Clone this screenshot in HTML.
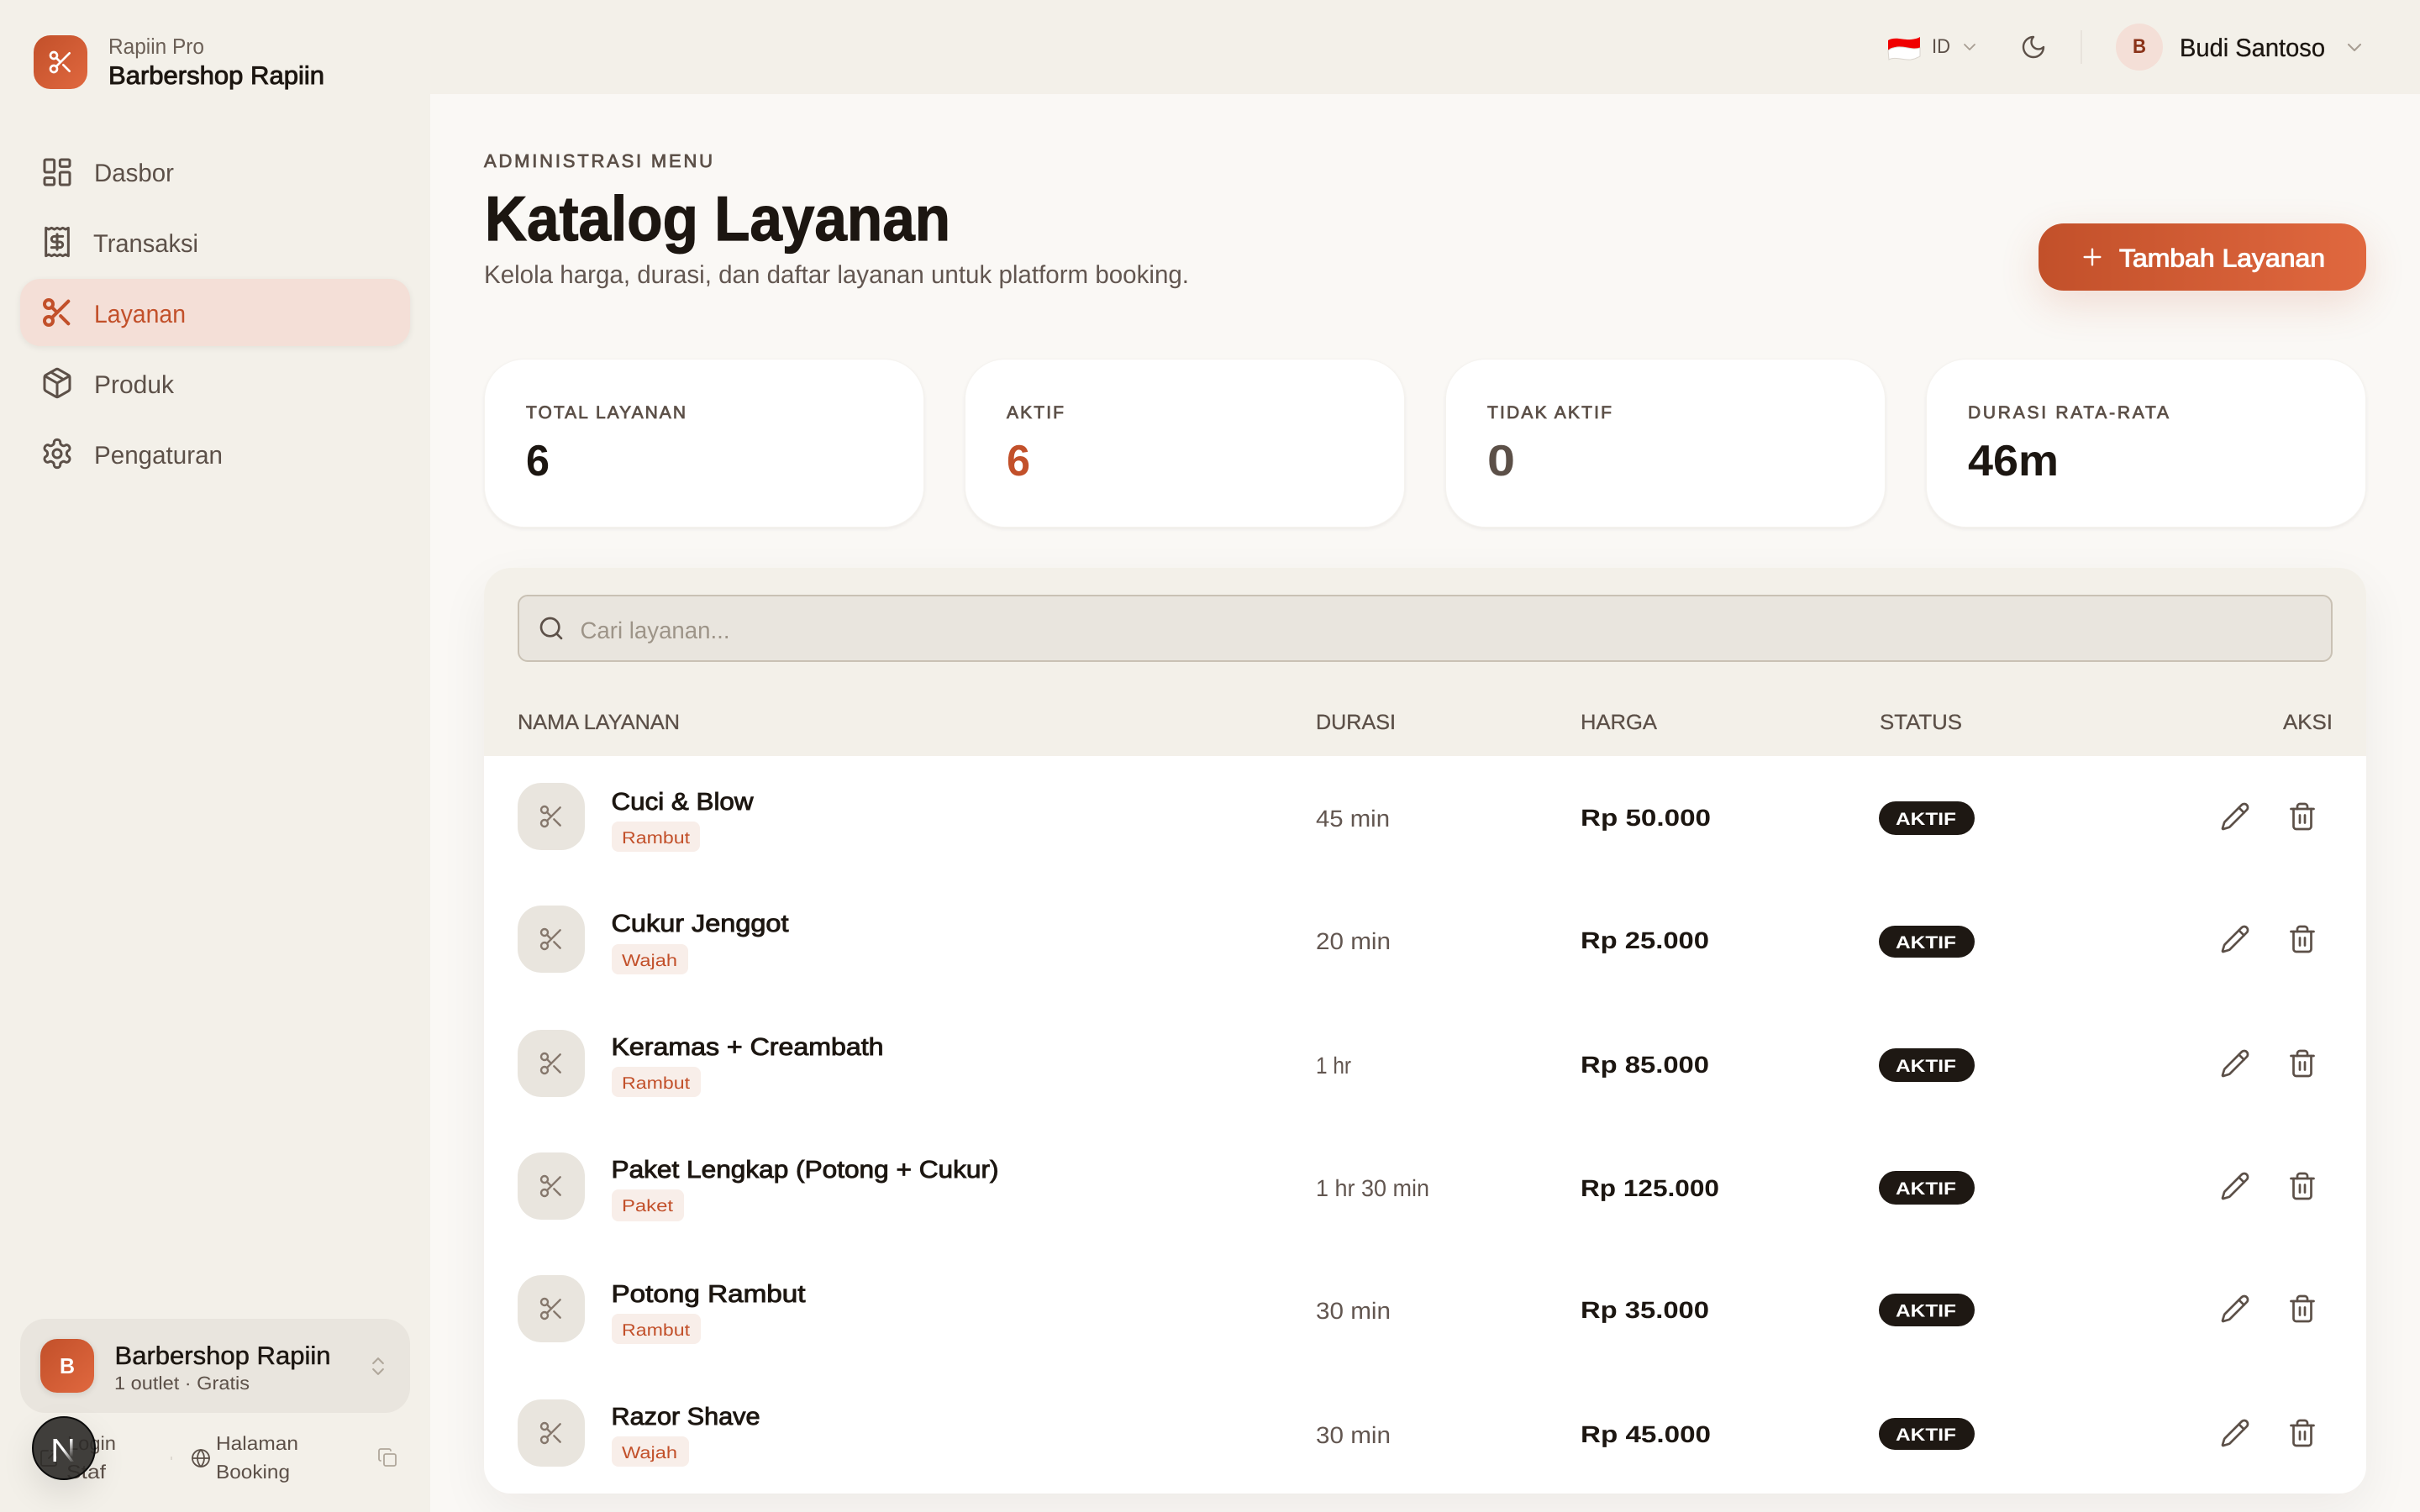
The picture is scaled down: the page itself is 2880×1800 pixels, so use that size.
<!DOCTYPE html>
<html lang="id">
<head>
<meta charset="utf-8">
<title>Katalog Layanan</title>
<style>
html,body{margin:0;padding:0;width:2880px;height:1800px;overflow:hidden;background:#F3F0E9}
.b{position:absolute;box-sizing:border-box}
svg{position:absolute;left:0;top:0}
text{font-family:"Liberation Sans",sans-serif;text-rendering:geometricPrecision;white-space:pre}
.i{fill:none;stroke-linecap:round;stroke-linejoin:round;stroke-width:1.8}
</style>
</head>
<body>
<!-- main bg -->
<div class="b" style="left:512px;top:112px;width:2368px;height:1688px;background:#FAF8F5"></div>
<!-- logo -->
<div class="b" style="left:40px;top:42px;width:64px;height:64px;border-radius:20px;background:linear-gradient(135deg,#C2502A,#E0683F)"></div>
<!-- active nav -->
<div class="b" style="left:24px;top:332px;width:464px;height:80px;border-radius:24px;background:#F4DFD7;box-shadow:0 2px 8px rgba(28,22,17,.07)"></div>
<!-- workspace -->
<div class="b" style="left:24px;top:1570px;width:464px;height:112px;border-radius:30px;background:#E9E5DE"></div>
<div class="b" style="left:48px;top:1594px;width:64px;height:64px;border-radius:20px;background:linear-gradient(135deg,#C2502A,#E0683F);box-shadow:0 2px 8px rgba(28,22,17,.12)"></div>
<!-- top bar -->
<div class="b" style="left:2476px;top:36px;width:2px;height:40px;background:#E8E3DC"></div>
<div class="b" style="left:2518px;top:28px;width:56px;height:56px;border-radius:50%;background:#F4DFD7"></div>
<!-- button -->
<div class="b" style="left:2426px;top:266px;width:390px;height:80px;border-radius:30px;background:linear-gradient(90deg,#C2502A,#E0683F);box-shadow:0 16px 48px rgba(194,80,42,.16)"></div>
<!-- stat cards -->
<div class="b" style="left:576px;top:427px;width:524px;height:201px;border-radius:48px;background:#fff;border:1px solid #F5F3EF;box-shadow:0 2px 5px rgba(28,22,17,.06)"></div>
<div class="b" style="left:1148px;top:427px;width:524px;height:201px;border-radius:48px;background:#fff;border:1px solid #F5F3EF;box-shadow:0 2px 5px rgba(28,22,17,.06)"></div>
<div class="b" style="left:1720px;top:427px;width:524px;height:201px;border-radius:48px;background:#fff;border:1px solid #F5F3EF;box-shadow:0 2px 5px rgba(28,22,17,.06)"></div>
<div class="b" style="left:2292px;top:427px;width:524px;height:201px;border-radius:48px;background:#fff;border:1px solid #F5F3EF;box-shadow:0 2px 5px rgba(28,22,17,.06)"></div>
<!-- table panel -->
<div class="b" style="left:576px;top:676px;width:2240px;height:1102px;border-radius:32px;background:#fff;box-shadow:0 20px 60px rgba(28,22,17,.06);overflow:hidden">
  <div style="height:224px;background:#F3F0E9"></div>
</div>
<div class="b" style="left:616px;top:708px;width:2160px;height:80px;border-radius:12px;background:#E9E5DE;border:2px solid #C9C1B4"></div>
<!-- row icons tiles -->
<div class="b" style="left:616px;top:932px;width:80px;height:80px;border-radius:28px;background:#E9E5DE"></div>
<div class="b" style="left:616px;top:1078px;width:80px;height:80px;border-radius:28px;background:#E9E5DE"></div>
<div class="b" style="left:616px;top:1226px;width:80px;height:80px;border-radius:28px;background:#E9E5DE"></div>
<div class="b" style="left:616px;top:1372px;width:80px;height:80px;border-radius:28px;background:#E9E5DE"></div>
<div class="b" style="left:616px;top:1518px;width:80px;height:80px;border-radius:28px;background:#E9E5DE"></div>
<div class="b" style="left:616px;top:1666px;width:80px;height:80px;border-radius:28px;background:#E9E5DE"></div>
<!-- tags -->
<div class="b" style="left:728px;top:978px;width:105px;height:36px;border-radius:8px;background:#F8EEE9"></div>
<div class="b" style="left:728px;top:1124px;width:91px;height:36px;border-radius:8px;background:#F8EEE9"></div>
<div class="b" style="left:728px;top:1270px;width:106px;height:36px;border-radius:8px;background:#F8EEE9"></div>
<div class="b" style="left:728px;top:1416px;width:86px;height:38px;border-radius:8px;background:#F8EEE9"></div>
<div class="b" style="left:728px;top:1564px;width:106px;height:36px;border-radius:8px;background:#F8EEE9"></div>
<div class="b" style="left:728px;top:1710px;width:92px;height:36px;border-radius:8px;background:#F8EEE9"></div>
<!-- pills -->
<div class="b" style="left:2236px;top:954px;width:114px;height:40px;border-radius:20px;background:#1E1813"></div>
<div class="b" style="left:2236px;top:1102px;width:114px;height:38px;border-radius:19px;background:#1E1813"></div>
<div class="b" style="left:2236px;top:1248px;width:114px;height:40px;border-radius:20px;background:#1E1813"></div>
<div class="b" style="left:2236px;top:1394px;width:114px;height:40px;border-radius:20px;background:#1E1813"></div>
<div class="b" style="left:2236px;top:1540px;width:114px;height:39px;border-radius:20px;background:#1E1813"></div>
<div class="b" style="left:2236px;top:1688px;width:114px;height:38px;border-radius:19px;background:#1E1813"></div>

<svg width="2880" height="1800" viewBox="0 0 2880 1800" xmlns="http://www.w3.org/2000/svg">
<!-- LOGO scissors -->
<g class="i" stroke="#fff" stroke-width="2" style="stroke-width:2" transform="translate(56,58) scale(1.333)"><circle cx="6" cy="6" r="3"/><path d="M8.12 8.12 12 12"/><path d="M20 4 8.12 15.88"/><circle cx="6" cy="18" r="3"/><path d="M14.5 14.5 20 20"/></g>
<text x="129" y="64" font-size="26" fill="#6B5F56" textLength="114" lengthAdjust="spacingAndGlyphs">Rapiin Pro</text>
<text x="129" y="100" font-size="30" fill="#1C1611" stroke="#1C1611" stroke-width=".9" textLength="257" lengthAdjust="spacingAndGlyphs">Barbershop Rapiin</text>

<!-- NAV icons -->
<g class="i" stroke="#5C5048" transform="translate(48,185) scale(1.667)"><rect width="7" height="9" x="3" y="3" rx="1"/><rect width="7" height="5" x="14" y="3" rx="1"/><rect width="7" height="9" x="14" y="12" rx="1"/><rect width="7" height="5" x="3" y="16" rx="1"/></g>
<g class="i" stroke="#5C5048" transform="translate(48,268) scale(1.667)"><path d="M4 2v20l2-1 2 1 2-1 2 1 2-1 2 1 2-1 2 1V2l-2 1-2-1-2 1-2-1-2 1-2-1-2 1Z"/><path d="M16 8h-6a2 2 0 1 0 0 4h4a2 2 0 1 1 0 4H8"/><path d="M12 17.5v-11"/></g>
<g class="i" stroke="#C2502A" style="stroke-width:2.4" transform="translate(48,352) scale(1.667)"><circle cx="6" cy="6" r="3"/><path d="M8.12 8.12 12 12"/><path d="M20 4 8.12 15.88"/><circle cx="6" cy="18" r="3"/><path d="M14.5 14.5 20 20"/></g>
<g class="i" stroke="#5C5048" transform="translate(48,436) scale(1.667)"><path d="M11 21.73a2 2 0 0 0 2 0l7-4A2 2 0 0 0 21 16V8a2 2 0 0 0-1-1.73l-7-4a2 2 0 0 0-2 0l-7 4A2 2 0 0 0 3 8v8a2 2 0 0 0 1 1.73z"/><path d="M12 22V12"/><path d="M3.3 7 12 12l8.7-5"/><path d="m7.5 4.27 9 5.15"/></g>
<g class="i" stroke="#5C5048" transform="translate(48,520) scale(1.667)"><path d="M12.22 2h-.44a2 2 0 0 0-2 2v.18a2 2 0 0 1-1 1.73l-.43.25a2 2 0 0 1-2 0l-.15-.08a2 2 0 0 0-2.73.73l-.22.38a2 2 0 0 0 .73 2.73l.15.1a2 2 0 0 1 1 1.72v.51a2 2 0 0 1-1 1.74l-.15.09a2 2 0 0 0-.73 2.73l.22.38a2 2 0 0 0 2.73.73l.15-.08a2 2 0 0 1 2 0l.43.25a2 2 0 0 1 1 1.73V20a2 2 0 0 0 2 2h.44a2 2 0 0 0 2-2v-.18a2 2 0 0 1 1-1.73l.43-.25a2 2 0 0 1 2 0l.15.08a2 2 0 0 0 2.73-.73l.22-.39a2 2 0 0 0-.73-2.73l-.15-.08a2 2 0 0 1-1-1.74v-.5a2 2 0 0 1 1-1.74l.15-.09a2 2 0 0 0 .73-2.73l-.22-.38a2 2 0 0 0-2.73-.73l-.15.08a2 2 0 0 1-2 0l-.43-.25a2 2 0 0 1-1-1.73V4a2 2 0 0 0-2-2z"/><circle cx="12" cy="12" r="3"/></g>
<!-- NAV text -->
<g font-size="30" fill="#5C5048">
<text x="112" y="216" textLength="95" lengthAdjust="spacingAndGlyphs">Dasbor</text>
<text x="111" y="300" textLength="125" lengthAdjust="spacingAndGlyphs">Transaksi</text>
<text x="112" y="384" fill="#C2502A" textLength="109" lengthAdjust="spacingAndGlyphs">Layanan</text>
<text x="112" y="468" textLength="95" lengthAdjust="spacingAndGlyphs">Produk</text>
<text x="112" y="552" textLength="153" lengthAdjust="spacingAndGlyphs">Pengaturan</text>
</g>

<!-- Workspace -->
<text x="71" y="1635" font-size="26" font-weight="700" fill="#fff" textLength="18" lengthAdjust="spacingAndGlyphs">B</text>
<text x="136.500" y="1624" font-size="30" fill="#1C1611" stroke="#1C1611" stroke-width=".5" textLength="257" lengthAdjust="spacingAndGlyphs">Barbershop Rapiin</text>
<text x="136" y="1654" font-size="22" fill="#5C5048" textLength="161" lengthAdjust="spacingAndGlyphs">1 outlet · Gratis</text>
<g class="i" stroke="#B0A79B" transform="translate(436,1612.5) scale(1.167)"><path d="m7 15 5 5 5-5"/><path d="m7 9 5-5 5 5"/></g>

<!-- footer links -->
<g class="i" stroke="#5C5048" transform="translate(46,1724)"><path d="M21 13v6a2 2 0 0 1-2 2H5a2 2 0 0 1-2-2V5a2 2 0 0 1 2-2h6"/><path d="m21 3-9 9"/><path d="M15 3h6v6"/></g>
<g font-size="23" fill="#5C5048">
<text x="80" y="1726" textLength="58" lengthAdjust="spacingAndGlyphs">Login</text>
<text x="79" y="1760" textLength="47" lengthAdjust="spacingAndGlyphs">Staf</text>
<text x="257" y="1726" textLength="98" lengthAdjust="spacingAndGlyphs">Halaman</text>
<text x="257" y="1760" textLength="88" lengthAdjust="spacingAndGlyphs">Booking</text>
</g>
<rect x="203" y="1734" width="2" height="4" fill="#DDD8D0"/>
<g class="i" stroke="#5C5048" transform="translate(227,1724)"><circle cx="12" cy="12" r="10"/><path d="M12 2a14.5 14.5 0 0 0 0 20 14.5 14.5 0 0 0 0-20"/><path d="M2 12h20"/></g>
<g class="i" stroke="#B0A79B" transform="translate(449,1723)"><rect width="14" height="14" x="8" y="8" rx="2"/><path d="M4 16c-1.1 0-2-.9-2-2V4c0-1.1.9-2 2-2h10c1.100 0 2 .9 2 2"/></g>

<!-- TOP BAR -->
<path d="M2247 48C2255 43 2266 48 2274 47S2283 45 2285 44V57C2276 60 2268 55 2258 56S2250 58 2247 60Z" fill="#F00000"/>
<path d="M2247 60C2250 58 2252 57 2258 56C2268 55 2276 60 2285 57V67C2283 68 2280 70 2274 71C2266 72 2255 67 2248 71Z" fill="#fff" stroke="#DAD5CE" stroke-width="1"/>
<text x="2299" y="63" font-size="24" fill="#5C5048" textLength="22" lengthAdjust="spacingAndGlyphs">ID</text>
<g class="i" stroke="#A89E93" transform="translate(2332,44)"><path d="m6 9 6 6 6-6"/></g>
<g class="i" stroke="#5C5048" transform="translate(2404,40) scale(1.333)"><path d="M12 3a6 6 0 0 0 9 9 9 9 0 1 1-9-9Z"/></g>
<text x="2538" y="63" font-size="24" font-weight="700" fill="#8A3218" textLength="16" lengthAdjust="spacingAndGlyphs">B</text>
<text x="2594" y="67" font-size="30" fill="#1C1611" stroke="#1C1611" stroke-width=".3" textLength="173" lengthAdjust="spacingAndGlyphs">Budi Santoso</text>
<g class="i" stroke="#A89E93" transform="translate(2788,42.500) scale(1.167)"><path d="m6 9 6 6 6-6"/></g>

<!-- HEADER -->
<text x="576" y="199" font-size="22" fill="#5C5048" stroke="#5C5048" stroke-width=".8" textLength="272" lengthAdjust="spacing">ADMINISTRASI MENU</text>
<text x="577" y="286" font-size="75" font-weight="700" fill="#1C1611" stroke="#1C1611" stroke-width="1.2" textLength="554" lengthAdjust="spacingAndGlyphs">Katalog Layanan</text>
<text x="576" y="337" font-size="30" fill="#625650" textLength="839" lengthAdjust="spacingAndGlyphs">Kelola harga, durasi, dan daftar layanan untuk platform booking.</text>

<!-- BUTTON -->
<g class="i" stroke="#fff" transform="translate(2474,290) scale(1.333)"><path d="M5 12h14"/><path d="M12 5v14"/></g>
<text x="2522" y="317.500" font-size="30" fill="#fff" stroke="#fff" stroke-width="1" textLength="245" lengthAdjust="spacingAndGlyphs">Tambah Layanan</text>

<!-- STATS -->
<g font-size="21" fill="#5C5048" stroke="#5C5048" stroke-width=".8">
<text x="626" y="498" textLength="190" lengthAdjust="spacing">TOTAL LAYANAN</text>
<text x="1198" y="498" textLength="68" lengthAdjust="spacing">AKTIF</text>
<text x="1770" y="498" textLength="148" lengthAdjust="spacing">TIDAK AKTIF</text>
<text x="2342" y="498" textLength="239" lengthAdjust="spacing">DURASI RATA-RATA</text>
</g>
<g font-size="52" font-weight="700">
<text x="626" y="566" fill="#1C1611" textLength="28" lengthAdjust="spacingAndGlyphs">6</text>
<text x="1198" y="566" fill="#C2502A" textLength="28" lengthAdjust="spacingAndGlyphs">6</text>
<text x="1770" y="566" fill="#5C5048" textLength="33" lengthAdjust="spacingAndGlyphs">0</text>
<text x="2342" y="566" fill="#1C1611" textLength="108" lengthAdjust="spacingAndGlyphs">46m</text>
</g>

<!-- SEARCH -->
<g class="i" stroke="#5C5048" style="stroke-width:2" transform="translate(640,732) scale(1.333)"><path d="m21 21-4.340-4.340"/><circle cx="11" cy="11" r="8"/></g>
<text x="690.500" y="760" font-size="28" fill="#9D9488" textLength="178" lengthAdjust="spacingAndGlyphs">Cari layanan...</text>

<!-- TABLE HEAD -->
<g font-size="25" fill="#5C5048" stroke="#5C5048" stroke-width=".3">
<text x="616" y="868" textLength="193" lengthAdjust="spacingAndGlyphs">NAMA LAYANAN</text>
<text x="1566" y="868" textLength="95" lengthAdjust="spacingAndGlyphs">DURASI</text>
<text x="1881" y="868" textLength="91" lengthAdjust="spacingAndGlyphs">HARGA</text>
<text x="2237" y="868" textLength="98" lengthAdjust="spacingAndGlyphs">STATUS</text>
<text x="2717" y="868" textLength="59" lengthAdjust="spacingAndGlyphs">AKSI</text>
</g>

<!-- ROW scissors -->
<g class="i" stroke="#85776C">
<g transform="translate(640,956) scale(1.333)"><circle cx="6" cy="6" r="3"/><path d="M8.12 8.12 12 12"/><path d="M20 4 8.12 15.88"/><circle cx="6" cy="18" r="3"/><path d="M14.5 14.5 20 20"/></g>
<g transform="translate(640,1102) scale(1.333)"><circle cx="6" cy="6" r="3"/><path d="M8.12 8.12 12 12"/><path d="M20 4 8.12 15.88"/><circle cx="6" cy="18" r="3"/><path d="M14.5 14.5 20 20"/></g>
<g transform="translate(640,1250) scale(1.333)"><circle cx="6" cy="6" r="3"/><path d="M8.12 8.12 12 12"/><path d="M20 4 8.12 15.88"/><circle cx="6" cy="18" r="3"/><path d="M14.5 14.5 20 20"/></g>
<g transform="translate(640,1396) scale(1.333)"><circle cx="6" cy="6" r="3"/><path d="M8.12 8.12 12 12"/><path d="M20 4 8.12 15.88"/><circle cx="6" cy="18" r="3"/><path d="M14.5 14.5 20 20"/></g>
<g transform="translate(640,1542) scale(1.333)"><circle cx="6" cy="6" r="3"/><path d="M8.12 8.12 12 12"/><path d="M20 4 8.12 15.88"/><circle cx="6" cy="18" r="3"/><path d="M14.5 14.5 20 20"/></g>
<g transform="translate(640,1690) scale(1.333)"><circle cx="6" cy="6" r="3"/><path d="M8.12 8.12 12 12"/><path d="M20 4 8.12 15.88"/><circle cx="6" cy="18" r="3"/><path d="M14.5 14.5 20 20"/></g>
</g>

<!-- ROW names -->
<g font-size="29" fill="#1C1611" stroke="#1C1611" stroke-width=".9">
<text x="727.500" y="964" textLength="169" lengthAdjust="spacingAndGlyphs">Cuci &amp; Blow</text>
<text x="727.500" y="1109" textLength="211" lengthAdjust="spacingAndGlyphs">Cukur Jenggot</text>
<text x="727.500" y="1256" textLength="324" lengthAdjust="spacingAndGlyphs">Keramas + Creambath</text>
<text x="727.500" y="1402" textLength="461" lengthAdjust="spacingAndGlyphs">Paket Lengkap (Potong + Cukur)</text>
<text x="727.500" y="1550" textLength="231" lengthAdjust="spacingAndGlyphs">Potong Rambut</text>
<text x="727.500" y="1696" textLength="177" lengthAdjust="spacingAndGlyphs">Razor Shave</text>
</g>
<!-- tags -->
<g font-size="20" fill="#C2502A">
<text x="740" y="1004" textLength="81" lengthAdjust="spacingAndGlyphs">Rambut</text>
<text x="740" y="1150" textLength="66" lengthAdjust="spacingAndGlyphs">Wajah</text>
<text x="740" y="1296" textLength="81" lengthAdjust="spacingAndGlyphs">Rambut</text>
<text x="740" y="1442" textLength="61" lengthAdjust="spacingAndGlyphs">Paket</text>
<text x="740" y="1590" textLength="81" lengthAdjust="spacingAndGlyphs">Rambut</text>
<text x="740" y="1736" textLength="66" lengthAdjust="spacingAndGlyphs">Wajah</text>
</g>
<!-- durations -->
<g font-size="28" fill="#625650">
<text x="1566" y="984" textLength="88" lengthAdjust="spacingAndGlyphs">45 min</text>
<text x="1566" y="1130" textLength="89" lengthAdjust="spacingAndGlyphs">20 min</text>
<text x="1566" y="1278" textLength="42" lengthAdjust="spacingAndGlyphs">1 hr</text>
<text x="1566" y="1424" textLength="135" lengthAdjust="spacingAndGlyphs">1 hr 30 min</text>
<text x="1566" y="1570" textLength="89" lengthAdjust="spacingAndGlyphs">30 min</text>
<text x="1566" y="1718" textLength="89" lengthAdjust="spacingAndGlyphs">30 min</text>
</g>
<!-- prices -->
<g font-size="28" font-weight="700" fill="#1C1611">
<text x="1881" y="983" textLength="155" lengthAdjust="spacingAndGlyphs">Rp 50.000</text>
<text x="1881" y="1129" textLength="153" lengthAdjust="spacingAndGlyphs">Rp 25.000</text>
<text x="1881" y="1277" textLength="153" lengthAdjust="spacingAndGlyphs">Rp 85.000</text>
<text x="1881" y="1424" textLength="165" lengthAdjust="spacingAndGlyphs">Rp 125.000</text>
<text x="1881" y="1569" textLength="153" lengthAdjust="spacingAndGlyphs">Rp 35.000</text>
<text x="1881" y="1717" textLength="155" lengthAdjust="spacingAndGlyphs">Rp 45.000</text>
</g>
<!-- status -->
<g font-size="21" font-weight="700" fill="#fff">
<text x="2256" y="982" textLength="72" lengthAdjust="spacingAndGlyphs">AKTIF</text>
<text x="2256" y="1129" textLength="72" lengthAdjust="spacingAndGlyphs">AKTIF</text>
<text x="2256" y="1276" textLength="72" lengthAdjust="spacingAndGlyphs">AKTIF</text>
<text x="2256" y="1422" textLength="72" lengthAdjust="spacingAndGlyphs">AKTIF</text>
<text x="2256" y="1567.500" textLength="72" lengthAdjust="spacingAndGlyphs">AKTIF</text>
<text x="2256" y="1715" textLength="72" lengthAdjust="spacingAndGlyphs">AKTIF</text>
</g>

<!-- actions -->
<g class="i" stroke="#5C5048">
<g transform="translate(2642,954) scale(1.5)"><path d="M21.174 6.812a1 1 0 0 0-3.986-3.987L3.842 16.174a2 2 0 0 0-.5.83l-1.321 4.352a.5.5 0 0 0 .623.622l4.353-1.32a2 2 0 0 0 .83-.497z"/><path d="m15 5 4 4"/></g>
<g transform="translate(2722,954) scale(1.5)"><path d="M3 6h18"/><path d="M19 6v14c0 1-1 2-2 2H7c-1 0-2-1-2-2V6"/><path d="M8 6V4c0-1 1-2 2-2h4c1 0 2 1 2 2v2"/><path d="M10 11v6"/><path d="M14 11v6"/></g>
<g transform="translate(2642,1100) scale(1.5)"><path d="M21.174 6.812a1 1 0 0 0-3.986-3.987L3.842 16.174a2 2 0 0 0-.5.83l-1.321 4.352a.5.5 0 0 0 .623.622l4.353-1.32a2 2 0 0 0 .83-.497z"/><path d="m15 5 4 4"/></g>
<g transform="translate(2722,1100) scale(1.5)"><path d="M3 6h18"/><path d="M19 6v14c0 1-1 2-2 2H7c-1 0-2-1-2-2V6"/><path d="M8 6V4c0-1 1-2 2-2h4c1 0 2 1 2 2v2"/><path d="M10 11v6"/><path d="M14 11v6"/></g>
<g transform="translate(2642,1248) scale(1.5)"><path d="M21.174 6.812a1 1 0 0 0-3.986-3.987L3.842 16.174a2 2 0 0 0-.5.83l-1.321 4.352a.5.5 0 0 0 .623.622l4.353-1.32a2 2 0 0 0 .83-.497z"/><path d="m15 5 4 4"/></g>
<g transform="translate(2722,1248) scale(1.5)"><path d="M3 6h18"/><path d="M19 6v14c0 1-1 2-2 2H7c-1 0-2-1-2-2V6"/><path d="M8 6V4c0-1 1-2 2-2h4c1 0 2 1 2 2v2"/><path d="M10 11v6"/><path d="M14 11v6"/></g>
<g transform="translate(2642,1394) scale(1.5)"><path d="M21.174 6.812a1 1 0 0 0-3.986-3.987L3.842 16.174a2 2 0 0 0-.5.83l-1.321 4.352a.5.5 0 0 0 .623.622l4.353-1.32a2 2 0 0 0 .83-.497z"/><path d="m15 5 4 4"/></g>
<g transform="translate(2722,1394) scale(1.5)"><path d="M3 6h18"/><path d="M19 6v14c0 1-1 2-2 2H7c-1 0-2-1-2-2V6"/><path d="M8 6V4c0-1 1-2 2-2h4c1 0 2 1 2 2v2"/><path d="M10 11v6"/><path d="M14 11v6"/></g>
<g transform="translate(2642,1540) scale(1.5)"><path d="M21.174 6.812a1 1 0 0 0-3.986-3.987L3.842 16.174a2 2 0 0 0-.5.83l-1.321 4.352a.5.5 0 0 0 .623.622l4.353-1.32a2 2 0 0 0 .83-.497z"/><path d="m15 5 4 4"/></g>
<g transform="translate(2722,1540) scale(1.5)"><path d="M3 6h18"/><path d="M19 6v14c0 1-1 2-2 2H7c-1 0-2-1-2-2V6"/><path d="M8 6V4c0-1 1-2 2-2h4c1 0 2 1 2 2v2"/><path d="M10 11v6"/><path d="M14 11v6"/></g>
<g transform="translate(2642,1688) scale(1.5)"><path d="M21.174 6.812a1 1 0 0 0-3.986-3.987L3.842 16.174a2 2 0 0 0-.5.83l-1.321 4.352a.5.5 0 0 0 .623.622l4.353-1.32a2 2 0 0 0 .83-.497z"/><path d="m15 5 4 4"/></g>
<g transform="translate(2722,1688) scale(1.5)"><path d="M3 6h18"/><path d="M19 6v14c0 1-1 2-2 2H7c-1 0-2-1-2-2V6"/><path d="M8 6V4c0-1 1-2 2-2h4c1 0 2 1 2 2v2"/><path d="M10 11v6"/><path d="M14 11v6"/></g>
</g>
</svg>

<!-- dev badge -->
<div class="b" style="left:38px;top:1686px;width:76px;height:76px;border-radius:50%;background:rgba(44,42,40,.9);border:2px solid #0c0c0c;box-shadow:0 16px 40px rgba(0,0,0,.1)"></div>
<svg width="2880" height="1800" viewBox="0 0 2880 1800" xmlns="http://www.w3.org/2000/svg">
<defs>
<linearGradient id="nd" x1="64" y1="1713" x2="88" y2="1742" gradientUnits="userSpaceOnUse"><stop offset=".45" stop-color="#fff"/><stop offset="1" stop-color="#fff" stop-opacity="0"/></linearGradient>
<linearGradient id="ns" x1="0" y1="1713" x2="0" y2="1735" gradientUnits="userSpaceOnUse"><stop offset="0" stop-color="#fff"/><stop offset="1" stop-color="#fff" stop-opacity="0"/></linearGradient>
</defs>
<path d="M63.500 1713h3.500v27h-3.500z" fill="#fff"/>
<path d="M63.500 1713h4L88 1740h-4z" fill="url(#nd)"/>
<path d="M83 1713h3.500v21H83z" fill="url(#ns)"/>
</svg>
</body>
</html>
